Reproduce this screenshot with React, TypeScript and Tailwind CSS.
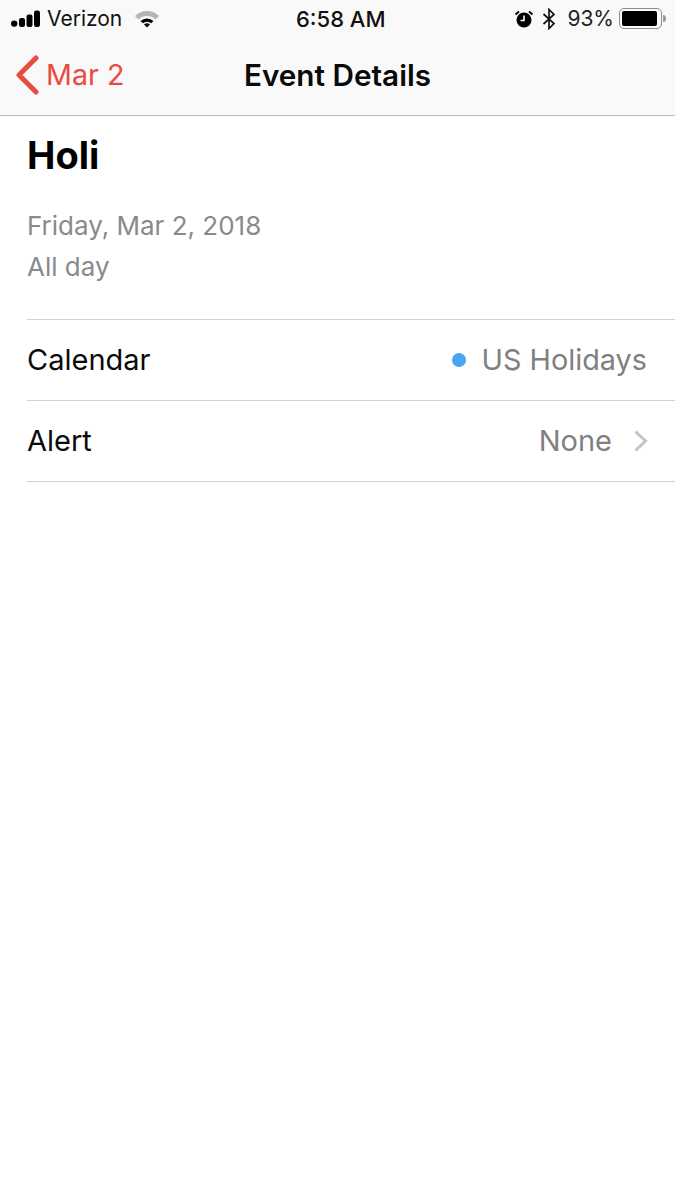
export default function App() {
  const font = { fontFamily: 'Inter, "Liberation Sans", sans-serif' };
  return (
    <div className="w-[675px] h-[1200px] bg-white overflow-hidden" style={font}>
      <header className="h-[116px] bg-[#f9f9f9] border-b border-[#b8b8b8] flex flex-col">
        <div className="h-[37px] flex items-center justify-between pl-[11px] pr-[9px] relative">
          <div className="flex items-center">
            <svg width="30" height="18" viewBox="0 0 30 18" className="mr-[7px]">
              <circle cx="3.2" cy="13.6" r="3.2" fill="#000" />
              <rect x="8" y="8" width="6" height="9" rx="2.2" fill="#000" />
              <rect x="15.5" y="4.5" width="6" height="12.5" rx="2.2" fill="#000" />
              <rect x="23" y="0.5" width="6" height="16.5" rx="2.2" fill="#000" />
            </svg>
            <span className="text-[21px] leading-none text-[#111] ml-[-1px]">Verizon</span>
            <svg width="26" height="18" viewBox="0 0 26 18" className="ml-[12px]">
              <path d="M1 6 A17 17 0 0 1 25 6 L21.6 9.4 A12.5 12.5 0 0 0 4.4 9.4 Z" fill="#b5b5b5" />
              <path d="M6.5 11 A9.5 9.5 0 0 1 19.5 11 L17 13.3 A6 6 0 0 0 9 13.3 Z" fill="#000" />
              <path d="M10 14.5 A4.5 4.5 0 0 1 16 14.5 L13 17.5 Z" fill="#000" />
            </svg>
          </div>
          <span className="absolute left-[296px] top-[7px] text-[22px] leading-[24px] font-medium text-[#111]">6:58 AM</span>
          <div className="flex items-center">
            <svg width="20" height="18" viewBox="0 0 20 18" className="mr-[7px]">
              <circle cx="10" cy="10" r="7.5" fill="#000" />
              <path d="M10 5.5 V10.5 H6.5" stroke="#fff" strokeWidth="1.6" fill="none" />
              <path d="M1.5 4.5 L5 1.5 M18.5 4.5 L15 1.5" stroke="#000" strokeWidth="2" />
            </svg>
            <svg width="16" height="22" viewBox="0 0 16 22" className="mr-[10px]">
              <path d="M2.5 6 L13 15.5 L8 20.5 V1.5 L13 6.5 L2.5 16" stroke="#111" strokeWidth="1.7" fill="none" />
            </svg>
            <span className="text-[21px] leading-none text-[#222] mr-[5px]">93%</span>
            <div className="w-[43px] h-[21px] border-[1.5px] border-[#8d8d8d] rounded-[5px] p-[2px] mr-[1px]">
              <div className="w-[35px] h-full bg-black rounded-[2px]" />
            </div>
            <div className="w-[3px] h-[7px] bg-[#9a9a9a] rounded-r-[3px]" />
          </div>
        </div>
        <div className="flex-1 relative flex items-center justify-center">
          <div className="absolute left-[15px] top-[18px] flex items-center">
            <svg width="24" height="40" viewBox="0 0 24 40">
              <path d="M21 3 L4 20 L21 37" stroke="#e94c3f" strokeWidth="5" strokeLinecap="round" strokeLinejoin="round" fill="none" />
            </svg>
            <span className="text-[28.7px] leading-none text-[#e94c3f] ml-[7px]">Mar 2</span>
          </div>
          <h1 className="text-[29.7px] leading-none font-semibold text-[#0a0a0a]">Event Details</h1>
        </div>
      </header>
      <main className="pl-[27px]">
        <h2 className="text-[38px] leading-[44px] font-bold text-black mt-[17px]">Holi</h2>
        <div className="mt-[28px] text-[26px] leading-[41px] text-[#8a8a8a]">
          <p>Friday, Mar 2, 2018</p>
          <p>All day</p>
        </div>
        <div className="mt-[32px] border-t border-[#d2d2d2]">
          <div className="h-[81px] border-b border-[#d2d2d2] flex items-center justify-between pr-[28px] text-[29px]">
            <span className="text-[#0a0a0a]">Calendar</span>
            <div className="flex items-center text-[#808080]">
              <span className="w-[14px] h-[14px] rounded-full bg-[#4aa5f2] mr-[16px]" />
              <span className="text-[28.8px]">US Holidays</span>
            </div>
          </div>
          <div className="h-[81px] border-b border-[#d2d2d2] flex items-center justify-between pr-[26px] text-[29px]">
            <span className="text-[#0a0a0a]">Alert</span>
            <div className="flex items-center text-[#808080]">
              <span>None</span>
              <svg width="16" height="24" viewBox="0 0 16 24" className="ml-[21px]">
                <path d="M2.5 2.5 L12.5 12 L2.5 21.5" stroke="#c4c4c6" strokeWidth="3" fill="none" />
              </svg>
            </div>
          </div>
        </div>
      </main>
    </div>
  );
}
